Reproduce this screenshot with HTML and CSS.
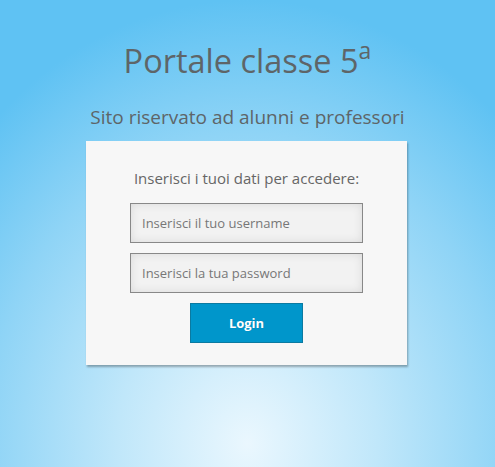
FILE: index.html
```html
<!DOCTYPE html>
<html lang="it">
<head>
<meta charset="utf-8">
<title>Portale classe 5ª</title>
<link rel="stylesheet" href="styles.css">
</head>
<body>
<main class="page">
  <h1 class="title">Portale classe 5<sup class="sup">a</sup></h1>
  <h2 class="subtitle">Sito riservato ad alunni e professori</h2>
  <form class="card">
    <p class="intro">Inserisci i tuoi dati per accedere:</p>
    <input class="field" type="text" placeholder="Inserisci il tuo username">
    <input class="field" type="password" placeholder="Inserisci la tua password">
    <button class="btn" type="button">Login</button>
  </form>
</main>
</body>
</html>
```
FILE: styles.css
```css
html, body {
  margin: 0;
  height: 100%;
}
body {
  font-family: "Open Sans", "Liberation Sans", sans-serif;
  color: #666;
  background: radial-gradient(ellipse 75% 95% at 50% 95%, #eaf7fe 0%, #c0e7fa 35%, #8fd4f6 70%, #5fc2f3 100%);
  background-color: #5fc2f3;
}
.page {
  display: flex;
  flex-direction: column;
  align-items: center;
  padding-top: 39px;
}
.title {
  margin: 0;
  font-size: 32.5px;
  font-weight: 400;
  line-height: 44px;
  color: #5e6568;
}
.sup {
  font-size: 23px;
  line-height: 0;
  vertical-align: 14px;
}
.subtitle {
  margin: 21px 0 0;
  font-size: 19px;
  font-weight: 400;
  line-height: 26px;
  color: #5e6568;
}
.card {
  margin: 11px 0 0 -2px;
  width: 321px;
  box-sizing: border-box;
  padding: 26px 0 22px;
  background: #f7f7f7;
  box-shadow: 1px 2px 2px rgba(0, 0, 0, 0.3);
  display: flex;
  flex-direction: column;
  align-items: center;
}
.intro {
  margin: 0 0 14px;
  font-size: 15px;
  line-height: 22px;
  color: #666;
}
.field {
  width: 233px;
  height: 40px;
  box-sizing: border-box;
  margin: 0 0 10px;
  padding: 0 11px;
  border: 1px solid #888;
  background: #f2f2f2;
  box-shadow: inset 0 0 10px rgba(0, 0, 0, 0.1);
  font-family: "Open Sans", "Liberation Sans", sans-serif;
  font-size: 13px;
  color: #555;
  outline: none;
}
.field::placeholder {
  color: #777;
}
.btn {
  width: 113px;
  height: 40px;
  box-sizing: border-box;
  border: 1px solid #0b7aa1;
  background: #0096cb;
  color: #fff;
  font-family: "Open Sans", "Liberation Sans", sans-serif;
  font-weight: 700;
  font-size: 13px;
  text-shadow: 0 0 1px rgba(0, 0, 0, 0.2);
  cursor: pointer;
}
```
